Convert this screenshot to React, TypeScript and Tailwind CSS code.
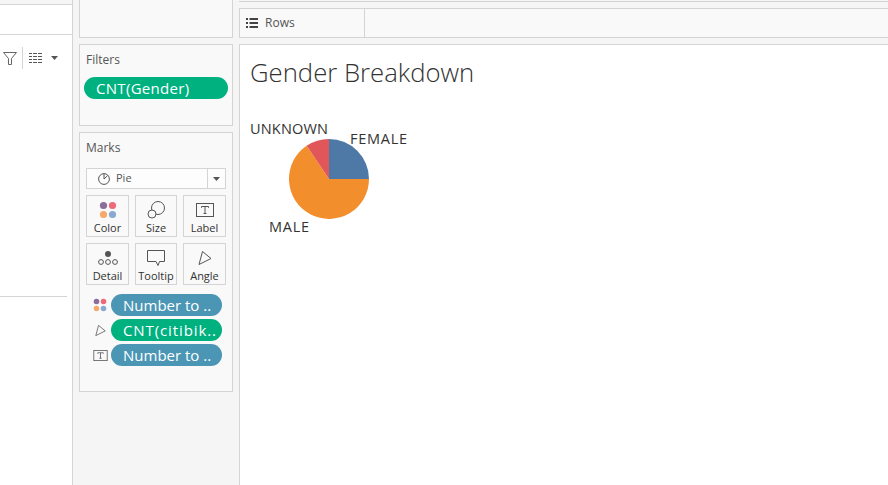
const font = { fontFamily: '"Open Sans", "Noto Sans", sans-serif' };

function Pill({ text, color, className = "" }: { text: string; color: string; className?: string }) {
  return (
    <div className={`h-[22px] rounded-full text-white text-[15px] leading-[22px] pl-3 whitespace-nowrap overflow-hidden ${color} ${className}`}>
      {text}
    </div>
  );
}

function Tile({ label, children }: { label: string; children: React.ReactNode }) {
  return (
    <div className="h-[42px] border border-[#d4d4d4] flex flex-col items-center text-[11px] leading-[14px] text-[#333]">
      <div className="h-[25px] w-full flex items-center justify-center pt-[2px]">{children}</div>
      <div>{label}</div>
    </div>
  );
}

const Dots = ({ size = 18 }: { size?: number }) => (
  <svg width={size} height={size} viewBox="0 0 18 18">
    <circle cx="4.5" cy="4.5" r="3.6" fill="#8a6d9b" />
    <circle cx="13.5" cy="4.5" r="3.6" fill="#ef6a78" />
    <circle cx="4.5" cy="13.5" r="3.6" fill="#f7a86b" />
    <circle cx="13.500" cy="13.5" r="3.6" fill="#88a9d1" />
  </svg>
);

const LabelIcon = ({ size = 18 }: { size?: number }) => (
  <svg width={size} height={size - 4} viewBox="0 0 18 14">
    <rect x="0.5" y="0.5" width="17" height="13" fill="none" stroke="#555" />
    <path d="M5.5 4.8V3.5h7v1.3M9 3.5v7M7.5 10.5h3" fill="none" stroke="#555" />
  </svg>
);

const AngleIcon = ({ size = 14 }: { size?: number }) => (
  <svg width={size} height={size + 2} viewBox="0 0 14 16">
    <path d="M1 14.500 4.500 1.500 13 8.500Z" fill="none" stroke="#555" strokeLinejoin="round" />
  </svg>
);

export default function App() {
  return (
    <div className="w-[888px] h-[485px] overflow-hidden flex bg-[#f5f5f5] text-[#555]" style={font}>
      <div className="w-[73px] h-full shrink-0 border-r border-[#d4d4d4] flex flex-col">
        <div className="h-[4px] shrink-0" />
        <div className="h-[31px] shrink-0 bg-white border-y border-[#d4d4d4]" />
        <div className="flex-1 bg-white">
          <div className="h-[262px] border-b border-[#d4d4d4] mr-[5px]">
            <div className="flex items-center h-[22px] pt-0 translate-y-[12px] pl-[3px]">
              <svg width="14" height="13" viewBox="0 0 14 13">
                <path d="M0.5 0.5h13L8.500 6.500V12.500H5.500V6.500Z" fill="none" stroke="#666" />
              </svg>
              <div className="w-px h-[22px] bg-[#d4d4d4] ml-[5px] mr-[6px]" />
              <svg width="13" height="10" viewBox="0 0 13 10" fill="#555">
                <path d="M0 0h3v1H0zM4 0h4v1H4zM9 0h4v1H9zM0 3h3v1H0zM4 3h4v1H4zM9 3h4v1H9zM0 6h3v1H0zM4 6h4v1H4zM9 6h4v1H9zM0 9h3v1H0zM4 9h4v1H4zM9 9h4v1H9z" />
              </svg>
              <svg width="7" height="4" viewBox="0 0 7 4" className="ml-[9px]">
                <path d="M0 0h7L3.500 4Z" fill="#555" />
              </svg>
            </div>
          </div>
        </div>
      </div>

      <div className="w-[154px] shrink-0 ml-[6px] h-full flex flex-col">
        <div className="h-[38px] shrink-0 bg-[#f9f9f9] border-x border-b border-[#d4d4d4]" />
        <div className="h-[82px] mt-[6px] shrink-0 bg-[#f9f9f9] border border-[#d4d4d4] pt-[7px] px-[4px]">
          <div className="text-[12px] leading-[16px] pl-[2px] mb-[9px]">Filters</div>
          <Pill text="CNT(Gender)" color="bg-[#00b180] tracking-[0.3px]" />
        </div>
        <div className="h-[260px] mt-[6px] shrink-0 bg-[#f9f9f9] border border-[#d4d4d4] pt-[7px] px-[6px]">
          <div className="text-[12px] leading-[16px] mb-[12px]">Marks</div>
          <div className="h-[21px] border border-[#d4d4d4] bg-white/60 flex items-center text-[11px]">
            <div className="flex-1 flex items-center pl-[11px] gap-[6px] h-full">
              <svg width="12" height="12" viewBox="0 0 12 12">
                <circle cx="6" cy="6" r="5.400" fill="none" stroke="#555" />
                <path d="M6 1v5l3.600-3.400" fill="none" stroke="#555" />
              </svg>
              <span>Pie</span>
            </div>
            <div className="w-[18px] h-full border-l border-[#d4d4d4] flex items-center justify-center">
              <svg width="7" height="4" viewBox="0 0 7 4">
                <path d="M0 0h7L3.500 4Z" fill="#555" />
              </svg>
            </div>
          </div>
          <div className="grid grid-cols-[43px_42px_43px] gap-x-[6px] gap-y-[6px] mt-[6px]">
            <Tile label="Color"><Dots /></Tile>
            <Tile label="Size">
              <svg width="18" height="20" viewBox="0 0 18 20">
                <circle cx="11" cy="8" r="6.500" fill="#f9f9f9" stroke="#555" />
                <circle cx="5" cy="14" r="4" fill="#f9f9f9" stroke="#555" />
              </svg>
            </Tile>
            <Tile label="Label"><LabelIcon /></Tile>
            <Tile label="Detail">
              <svg width="22" height="18" viewBox="0 0 22 18">
                <circle cx="11" cy="5" r="3" fill="#555" />
                <circle cx="4" cy="13" r="2.400" fill="none" stroke="#555" />
                <circle cx="11" cy="13" r="2.400" fill="none" stroke="#555" />
                <circle cx="18" cy="13" r="2.400" fill="none" stroke="#555" />
              </svg>
            </Tile>
            <Tile label="Tooltip">
              <svg width="18" height="18" viewBox="0 0 18 18">
                <path d="M0.500 1.500h17v11h-5l-1.500 4-2-4h-8.500Z" fill="none" stroke="#555" />
              </svg>
            </Tile>
            <Tile label="Angle"><AngleIcon size={14} /></Tile>
          </div>
          <div className="mt-[9px] flex flex-col gap-[3px]">
            <div className="flex items-center">
              <div className="w-[25px] flex justify-start pl-[7px]"><Dots size={14} /></div>
              <Pill text="Number to .." color="bg-[#4b96b5]" className="w-[111px]" />
            </div>
            <div className="flex items-center">
              <div className="w-[25px] flex justify-start pl-[9px]"><AngleIcon size={11} /></div>
              <Pill text="CNT(citibik.." color="bg-[#00b180]" className="w-[111px] tracking-[0.9px]" />
            </div>
            <div className="flex items-center">
              <div className="w-[25px] flex justify-start pl-[7px]"><LabelIcon size={15} /></div>
              <Pill text="Number to .." color="bg-[#4b96b5]" className="w-[111px]" />
            </div>
          </div>
        </div>
      </div>

      <div className="flex-1 ml-[6px] h-full flex flex-col min-w-0">
        <div className="h-[2px] shrink-0 border-b border-[#d4d4d4]" />
        <div className="h-[30px] mt-[6px] shrink-0 flex bg-[#f9f9f9] border-y border-l border-[#d4d4d4]">
          <div className="w-[125px] h-full border-r border-[#d4d4d4] flex items-center pl-[6px] gap-[7px] text-[12px]">
            <svg width="12" height="10" viewBox="0 0 12 10" fill="#444">
              <path d="M0 0h2v2H0zM3.500 0H12v2H3.500zM0 4h2v2H0zM3.500 4H12v2H3.500zM0 8h2v2H0zM3.500 8H12v2H3.500z" />
            </svg>
            <span>Rows</span>
          </div>
        </div>
        <div className="flex-1 mt-[6px] bg-white border-t border-l border-[#d4d4d4] pl-[10px]">
          <div className="text-[25.7px] leading-[32px] font-light text-[#333] mt-[12px]">Gender Breakdown</div>
          <svg width="180" height="140" viewBox="0 0 180 140" className="mt-[11px] -ml-[10px] block" style={{ fontSize: 14.5, fill: "#333" }}>
            <path d="M89 79V39A40 40 0 0 1 129 79Z" fill="#4e79a7" />
            <path d="M89 79H129A40 40 0 1 1 66.600 45.800Z" fill="#f28e2b" />
            <path d="M89 79 66.600 45.800A40 40 0 0 1 89 39Z" fill="#e15759" />
            <text x="10" y="34" textLength={78}>UNKNOWN</text>
            <text x="110" y="44" textLength={57}>FEMALE</text>
            <text x="29" y="132" textLength={40}>MALE</text>
          </svg>
        </div>
      </div>
    </div>
  );
}
